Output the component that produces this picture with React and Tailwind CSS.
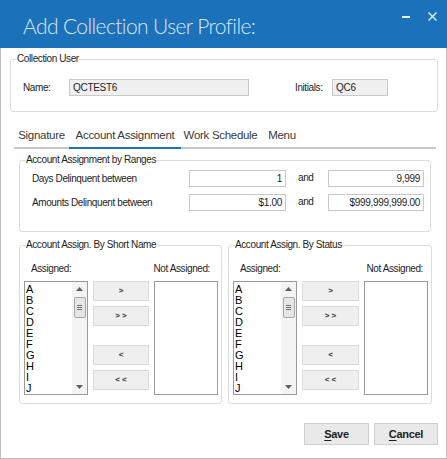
import React from "react";

const letters = ["A", "B", "C", "D", "E", "F", "G", "H", "I", "J"];

const label = "text-[10px] leading-[12px] tracking-[-0.4px] text-[#1e1e1e]";

function Group({ title, className = "", children }) {
  return (
    <fieldset className={`rounded-[3px] border border-[#dcdcdc] ${className}`}>
      <legend className={label}>{title}</legend>
      {children}
    </fieldset>
  );
}

function Field({ value, className = "" }) {
  return (
    <div
      className={`flex h-[17px] items-center border border-[#c9c9c9] px-[3px] text-[10px] tracking-[-0.3px] text-[#1e1e1e] ${className}`}
    >
      {value}
    </div>
  );
}

function ListBox({ items }) {
  return (
    <div className="flex h-[114px] w-[64px] border border-[#9a9a9a] bg-white">
      <div className="flex-1 overflow-hidden pl-[1px] pt-[2px]">
        {items.map((item) => (
          <div key={item} className="text-[11px] leading-[11px] text-black">
            {item}
          </div>
        ))}
      </div>
      {items.length > 0 && (
        <div className="flex w-[15px] flex-col items-center bg-[#f4f4f4] py-[5px]">
          <svg width="7" height="4" viewBox="0 0 7 4">
            <path d="M0 4 L3.5 0 L7 4 Z" fill="#606060" />
          </svg>
          <div className="mt-[6px] flex h-[21px] w-[12px] flex-col items-center justify-center gap-[1px] rounded-[2px] border border-[#a8a8a8] bg-[#e6e6e6]">
            <span className="h-px w-[5px] bg-[#707070]" />
            <span className="h-px w-[5px] bg-[#707070]" />
            <span className="h-px w-[5px] bg-[#707070]" />
          </div>
          <div className="flex-1" />
          <svg width="7" height="4" viewBox="0 0 7 4">
            <path d="M0 0 L3.5 4 L7 0 Z" fill="#606060" />
          </svg>
        </div>
      )}
    </div>
  );
}

function MoveButton({ text, className = "" }) {
  return (
    <button
      type="button"
      className={`flex h-[20px] w-full items-center justify-center border border-[#dadada] bg-[#efefef] text-[8px] font-bold text-[#333] ${className}`}
    >
      {text}
    </button>
  );
}

function AssignGroup({ title, width, btnWidth, notMargin }) {
  return (
    <Group title={title} className={`${width} pl-[6px] pr-[3px] pb-[8px]`}>
      <div className="-ml-[2px]">
        <div className={`mt-[12px] flex ${label}`}>
          <span className="ml-[7px]">Assigned:</span>
          <span className={`ml-auto ${notMargin}`}>Not Assigned:</span>
        </div>
        <div className="mt-[6px] flex gap-[5px]">
          <ListBox items={letters} />
          <div className={`flex ${btnWidth} flex-col`}>
            <MoveButton text=">" />
            <MoveButton text="> >" className="mt-[5px]" />
            <MoveButton text="<" className="mt-[19px]" />
            <MoveButton text="< <" className="mt-[5px]" />
          </div>
          <ListBox items={[]} />
        </div>
      </div>
    </Group>
  );
}

function DialogButton({ hot, rest, width }) {
  return (
    <button
      type="button"
      className={`flex h-[22px] ${width} items-center justify-center border border-[#cfcfcf] bg-[#e9e9e9] text-[11px] font-bold tracking-[-0.3px] text-[#1e1e1e]`}
    >
      <span className="underline underline-offset-2">{hot}</span>
      {rest}
    </button>
  );
}

export default function App() {
  return (
    <div
      className="flex h-[459px] w-[447px] flex-col bg-white"
      style={{ fontFamily: '"Liberation Sans", Arial, sans-serif' }}
    >
      <div className="flex h-[48px] items-start bg-[#1b71ba]">
        <h1
          className="ml-[23px] mt-[12px] text-[21px] font-light leading-[28px] tracking-[-0.6px] text-[#dce9f6]"
          style={{ fontFamily: "'Lato Light', Lato, 'Open Sans', sans-serif" }}
        >
          Add Collection User Profile:
        </h1>
        <div className="ml-auto mr-[10px] mt-[10px] flex items-center gap-[18px]">
          <svg width="8" height="12" viewBox="0 0 8 12">
            <rect x="0" y="6" width="8" height="2" fill="#e8f0f8" />
          </svg>
          <svg width="9" height="9" viewBox="0 0 9 9">
            <path d="M0.5 0.5 L8.5 8.5 M8.5 0.5 L0.5 8.5" stroke="#e8f0f8" strokeWidth="1.4" />
          </svg>
        </div>
      </div>

      <div className="flex flex-1 flex-col border-x border-b border-[#bdbdbd]">
        <Group title="Collection User" className="ml-[9px] mt-[5px] w-[428px] px-[6px] pb-[15px]">
          <div className={`mt-[14px] flex items-center ${label}`}>
            <span className="ml-[6px] w-[46px]">Name:</span>
            <Field value="QCTEST6" className="w-[180px] bg-[#f0f0f0]" />
            <span className="ml-[46px] w-[37px]">Initials:</span>
            <Field value="QC6" className="w-[56px] bg-[#f0f0f0]" />
          </div>
        </Group>

        <div
          className="ml-[13px] mt-[16px] flex w-[422px] border-b-2 border-[#c8c8c8] text-[11.5px] leading-[14px] tracking-[-0.3px] text-[#3a3a3a]"
        >
          <span className="w-[55px] pb-[5px] text-center">Signature</span>
          <span className="-mb-[2px] w-[112px] border-b-2 border-[#1b71ba] pb-[5px] text-center">
            Account Assignment
          </span>
          <span className="w-[79px] pb-[5px] text-center">Work Schedule</span>
          <span className="w-[44px] pb-[5px] text-center">Menu</span>
        </div>

        <Group title="Account Assignment by Ranges" className="ml-[18px] mt-[5px] w-[412px] px-[6px] pb-[20px]">
          <div className={`mt-[4px] flex flex-col gap-[7px] ${label}`}>
            <div className="flex items-center">
              <span className="ml-[6px] w-[157px]">Days Delinquent between</span>
              <Field value="1" className="w-[97px] justify-end bg-white" />
              <span className="ml-[12px] w-[30px] -translate-y-px">and</span>
              <Field value="9,999" className="w-[96px] justify-end bg-white" />
            </div>
            <div className="flex items-center">
              <span className="ml-[6px] w-[157px]">Amounts Delinquent between</span>
              <Field value="$1.00" className="w-[97px] justify-end bg-white" />
              <span className="ml-[12px] w-[30px] -translate-y-px">and</span>
              <Field value="$999,999,999.00" className="w-[96px] justify-end bg-white" />
            </div>
          </div>
        </Group>

        <div className="ml-[18px] mt-[7px] flex gap-[6px]">
          <AssignGroup
            title="Account Assign. By Short Name"
            width="w-[203px]"
            btnWidth="w-[56px]"
            notMargin="mr-[8px]"
          />
          <AssignGroup
            title="Account Assign. By Status"
            width="w-[204px]"
            btnWidth="w-[57px]"
            notMargin="mr-[5px]"
          />
        </div>

        <div className="mr-[8px] mt-[19px] flex justify-end gap-[5px]">
          <DialogButton hot="S" rest="ave" width="w-[65px]" />
          <DialogButton hot="C" rest="ancel" width="w-[64px]" />
        </div>
      </div>
    </div>
  );
}
